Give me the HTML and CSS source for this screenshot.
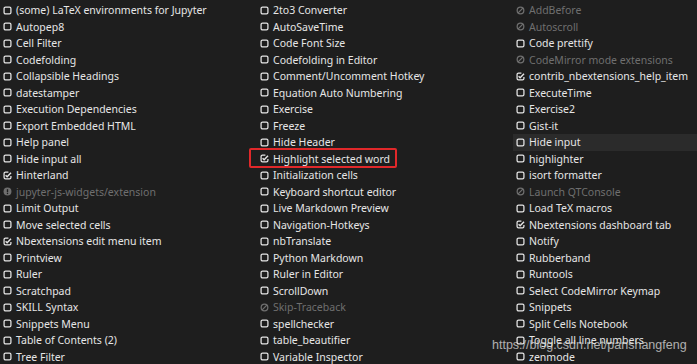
FILE: index.html
```html
<!DOCTYPE html>
<html lang="en">
<head>
    <meta charset="UTF-8">
    <title>Nbextensions</title>
    <link rel="stylesheet" href="styles.css">
</head>
<body>

<svg class="defs" width="0" height="0">
    <symbol id="sq" viewBox="0 0 10 10">
        <rect x="1.2" y="1.2" width="7.6" height="7.6" rx="1.6" fill="none" stroke="currentColor" stroke-width="1.4"/>
    </symbol>
    <symbol id="ck" viewBox="0 0 10 10">
        <path d="M8.8 5.6V7.2a1.6 1.6 0 0 1-1.6 1.6H2.8a1.6 1.6 0 0 1-1.6-1.6V2.8a1.6 1.6 0 0 1 1.6-1.6H6" fill="none" stroke="currentColor" stroke-width="1.4"/>
        <path d="M2.9 4.6L4.6 6.3L8.9 1.9" fill="none" stroke="currentColor" stroke-width="1.6"/>
    </symbol>
    <symbol id="ban" viewBox="0 0 10 10">
        <circle cx="5" cy="5" r="3.7" fill="none" stroke="currentColor" stroke-width="1.4"/>
        <path d="M2.4 7.6L7.6 2.4" stroke="currentColor" stroke-width="1.4"/>
    </symbol>
    <symbol id="warn" viewBox="0 0 10 10">
        <circle cx="5" cy="5" r="4.4" fill="currentColor"/>
        <path d="M5 2.4V5.8" stroke="#1e1e1e" stroke-width="1.5"/>
        <circle cx="5" cy="7.3" r="0.8" fill="#1e1e1e"/>
    </symbol>
</svg>

<div class="list">
    <div class="col">
        <div class="item"><svg class="ic"><use href="#sq"/></svg>(some) LaTeX environments for Jupyter</div>
        <div class="item"><svg class="ic"><use href="#sq"/></svg>Autopep8</div>
        <div class="item"><svg class="ic"><use href="#sq"/></svg>Cell Filter</div>
        <div class="item"><svg class="ic"><use href="#sq"/></svg>Codefolding</div>
        <div class="item"><svg class="ic"><use href="#sq"/></svg>Collapsible Headings</div>
        <div class="item"><svg class="ic"><use href="#sq"/></svg>datestamper</div>
        <div class="item"><svg class="ic"><use href="#sq"/></svg>Execution Dependencies</div>
        <div class="item"><svg class="ic"><use href="#sq"/></svg>Export Embedded HTML</div>
        <div class="item"><svg class="ic"><use href="#sq"/></svg>Help panel</div>
        <div class="item"><svg class="ic"><use href="#sq"/></svg>Hide input all</div>
        <div class="item"><svg class="ic"><use href="#ck"/></svg>Hinterland</div>
        <div class="item off"><svg class="ic"><use href="#warn"/></svg>jupyter-js-widgets/extension</div>
        <div class="item"><svg class="ic"><use href="#sq"/></svg>Limit Output</div>
        <div class="item"><svg class="ic"><use href="#sq"/></svg>Move selected cells</div>
        <div class="item"><svg class="ic"><use href="#ck"/></svg>Nbextensions edit menu item</div>
        <div class="item"><svg class="ic"><use href="#sq"/></svg>Printview</div>
        <div class="item"><svg class="ic"><use href="#sq"/></svg>Ruler</div>
        <div class="item"><svg class="ic"><use href="#sq"/></svg>Scratchpad</div>
        <div class="item"><svg class="ic"><use href="#sq"/></svg>SKILL Syntax</div>
        <div class="item"><svg class="ic"><use href="#sq"/></svg>Snippets Menu</div>
        <div class="item"><svg class="ic"><use href="#sq"/></svg>Table of Contents (2)</div>
        <div class="item"><svg class="ic"><use href="#sq"/></svg>Tree Filter</div>
    </div>
    <div class="col">
        <div class="item"><svg class="ic"><use href="#sq"/></svg>2to3 Converter</div>
        <div class="item"><svg class="ic"><use href="#sq"/></svg>AutoSaveTime</div>
        <div class="item"><svg class="ic"><use href="#sq"/></svg>Code Font Size</div>
        <div class="item"><svg class="ic"><use href="#sq"/></svg>Codefolding in Editor</div>
        <div class="item"><svg class="ic"><use href="#sq"/></svg>Comment/Uncomment Hotkey</div>
        <div class="item"><svg class="ic"><use href="#sq"/></svg>Equation Auto Numbering</div>
        <div class="item"><svg class="ic"><use href="#sq"/></svg>Exercise</div>
        <div class="item"><svg class="ic"><use href="#sq"/></svg>Freeze</div>
        <div class="item"><svg class="ic"><use href="#sq"/></svg>Hide Header</div>
        <div class="item"><svg class="ic"><use href="#ck"/></svg>Highlight selected word</div>
        <div class="item"><svg class="ic"><use href="#sq"/></svg>Initialization cells</div>
        <div class="item"><svg class="ic"><use href="#sq"/></svg>Keyboard shortcut editor</div>
        <div class="item"><svg class="ic"><use href="#sq"/></svg>Live Markdown Preview</div>
        <div class="item"><svg class="ic"><use href="#sq"/></svg>Navigation-Hotkeys</div>
        <div class="item"><svg class="ic"><use href="#sq"/></svg>nbTranslate</div>
        <div class="item"><svg class="ic"><use href="#sq"/></svg>Python Markdown</div>
        <div class="item"><svg class="ic"><use href="#sq"/></svg>Ruler in Editor</div>
        <div class="item"><svg class="ic"><use href="#sq"/></svg>ScrollDown</div>
        <div class="item off"><svg class="ic"><use href="#ban"/></svg>Skip-Traceback</div>
        <div class="item"><svg class="ic"><use href="#sq"/></svg>spellchecker</div>
        <div class="item"><svg class="ic"><use href="#sq"/></svg>table_beautifier</div>
        <div class="item"><svg class="ic"><use href="#sq"/></svg>Variable Inspector</div>
    </div>
    <div class="col">
        <div class="item off"><svg class="ic"><use href="#ban"/></svg>AddBefore</div>
        <div class="item off"><svg class="ic"><use href="#ban"/></svg>Autoscroll</div>
        <div class="item"><svg class="ic"><use href="#sq"/></svg>Code prettify</div>
        <div class="item off"><svg class="ic"><use href="#ban"/></svg>CodeMirror mode extensions</div>
        <div class="item"><svg class="ic"><use href="#ck"/></svg>contrib_nbextensions_help_item</div>
        <div class="item"><svg class="ic"><use href="#sq"/></svg>ExecuteTime</div>
        <div class="item"><svg class="ic"><use href="#sq"/></svg>Exercise2</div>
        <div class="item"><svg class="ic"><use href="#sq"/></svg>Gist-it</div>
        <div class="item hover"><svg class="ic"><use href="#sq"/></svg>Hide input</div>
        <div class="item"><svg class="ic"><use href="#sq"/></svg>highlighter</div>
        <div class="item"><svg class="ic"><use href="#sq"/></svg>isort formatter</div>
        <div class="item off"><svg class="ic"><use href="#ban"/></svg>Launch QTConsole</div>
        <div class="item"><svg class="ic"><use href="#sq"/></svg>Load TeX macros</div>
        <div class="item"><svg class="ic"><use href="#ck"/></svg>Nbextensions dashboard tab</div>
        <div class="item"><svg class="ic"><use href="#sq"/></svg>Notify</div>
        <div class="item"><svg class="ic"><use href="#sq"/></svg>Rubberband</div>
        <div class="item"><svg class="ic"><use href="#sq"/></svg>Runtools</div>
        <div class="item"><svg class="ic"><use href="#sq"/></svg>Select CodeMirror Keymap</div>
        <div class="item"><svg class="ic"><use href="#sq"/></svg>Snippets</div>
        <div class="item"><svg class="ic"><use href="#sq"/></svg>Split Cells Notebook</div>
        <div class="item"><svg class="ic"><use href="#sq"/></svg>Toggle all line numbers</div>
        <div class="item"><svg class="ic"><use href="#sq"/></svg>zenmode</div>
    </div>
</div>

<div class="mark"></div>
<div class="watermark">https://blog.csdn.net/panshangfeng</div>

</body>
</html>
```

FILE: styles.css
```css
body {
    margin: 0;
    padding: 0;
    width: 697px;
    height: 364px;
    overflow: hidden;
    background-color: #1e1e1e;
    font-family: "Noto Sans", "Open Sans", sans-serif;
    font-size: 10.5px;
    color: #e6e6e6;
}

.defs {
    position: absolute;
}

.list {
    display: grid;
    grid-template-columns: 257px 256px 1fr;
    padding-top: 2px;
}

.item {
    display: flex;
    align-items: center;
    height: 16.5px;
    padding-left: 3px;
    white-space: nowrap;
}

.ic {
    width: 9px;
    height: 9px;
    margin-right: 4px;
    flex-shrink: 0;
}

.off {
    color: #6f6f6f;
}

.hover {
    background-color: #2b2b2b;
}

.mark {
    position: absolute;
    left: 249px;
    top: 148px;
    width: 144px;
    height: 16px;
    border: 2px solid #e0282a;
    border-radius: 2px;
}

.watermark {
    position: absolute;
    left: 492px;
    top: 338px;
    font-family: "Liberation Sans", Arial, sans-serif;
    font-size: 12.5px;
    color: rgba(225, 225, 225, 0.75);
}
```
